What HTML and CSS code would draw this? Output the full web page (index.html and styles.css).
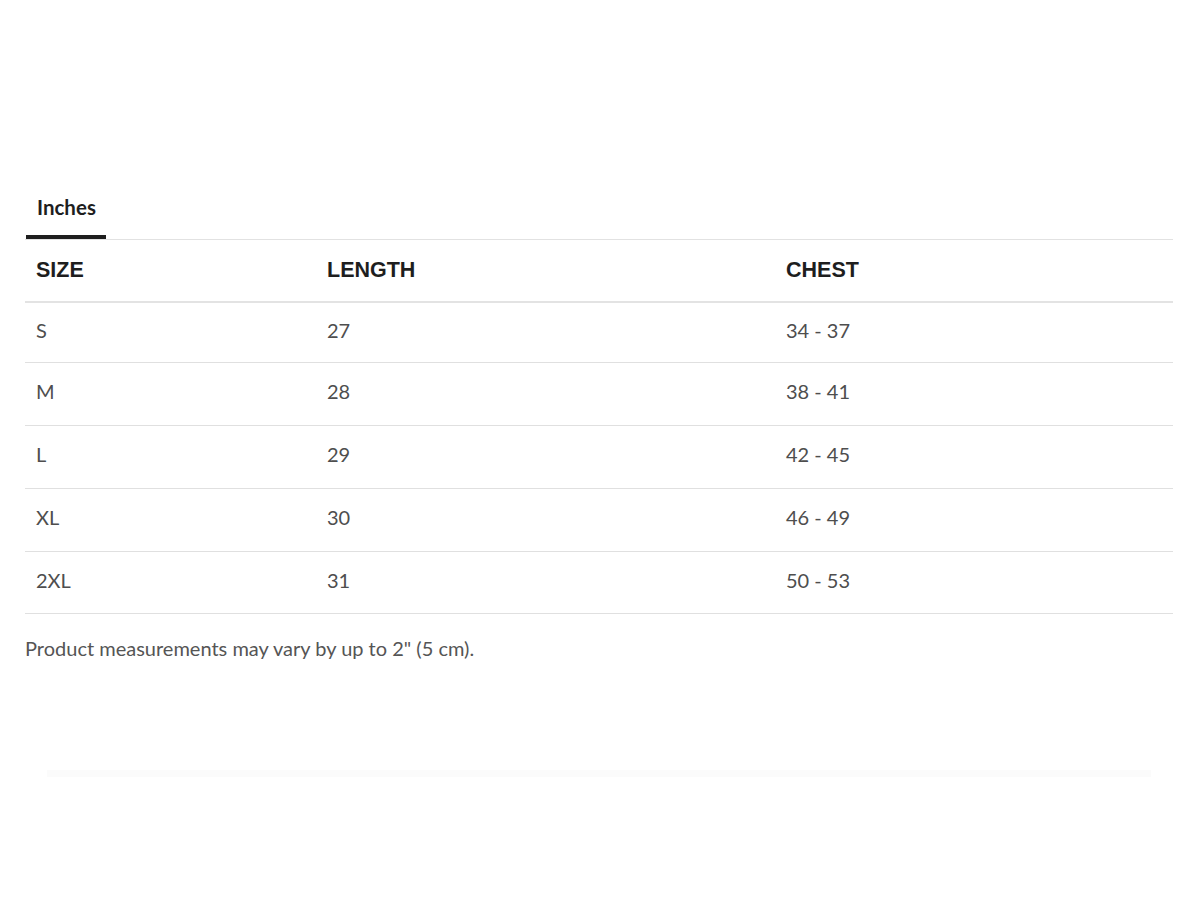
FILE: index.html
```html
<!DOCTYPE html>
<html lang="en">
<head>
<meta charset="utf-8">
<title>Size guide</title>
<link rel="stylesheet" href="styles.css">
</head>
<body>
<main class="guide">
  <div class="tabs">
    <div class="tab tab-active">Inches</div>
  </div>
  <table class="size-table">
    <thead>
      <tr>
        <th class="col-size">SIZE</th>
        <th class="col-length">LENGTH</th>
        <th class="col-chest">CHEST</th>
      </tr>
    </thead>
    <tbody>
      <tr class="first-row"><td>S</td><td>27</td><td>34 - 37</td></tr>
      <tr><td>M</td><td>28</td><td>38 - 41</td></tr>
      <tr><td>L</td><td>29</td><td>42 - 45</td></tr>
      <tr><td>XL</td><td>30</td><td>46 - 49</td></tr>
      <tr class="last-row"><td>2XL</td><td>31</td><td>50 - 53</td></tr>
    </tbody>
  </table>
  <p class="note">Product measurements may vary by up to 2" (5 cm).</p>
  <div class="fade"></div>
</main>
</body>
</html>
```
FILE: styles.css
```css
html, body {
  margin: 0;
  padding: 0;
  background: #ffffff;
}

.guide {
  width: 1148px;
  margin-left: 25px;
  padding-top: 191px;
}

.tabs {
  display: flex;
  border-bottom: 1px solid #e2e2e2;
}

.tab {
  font-family: "Lato", "Liberation Sans", sans-serif;
  font-weight: 700;
  font-size: 20.5px;
  color: #1e1e1e;
  padding: 5px 10px 16px 11px;
  line-height: 23px;
  margin-left: 1px;
}

.tab-active {
  border-bottom: 4px solid #1e1e1e;
}

.size-table {
  width: 100%;
  border-collapse: collapse;
  table-layout: fixed;
}

.size-table th {
  font-family: "Liberation Sans", Arial, sans-serif;
  font-weight: 700;
  font-size: 21.5px;
  color: #1e1e1e;
  text-align: left;
  height: 61px;
  padding: 0 0 0 11px;
  border-bottom: 2px solid #e3e3e3;
}

.col-size { width: 280px; }
.col-length { width: 448px; }
.col-chest { width: auto; }

.size-table td {
  font-family: "Lato", "Liberation Sans", sans-serif;
  font-size: 20px;
  color: #4e4e4e;
  height: 56px;
  padding: 0 0 6px 11px;
  border-bottom: 1px solid #e0e0e0;
}

.size-table .first-row td {
  height: 53px;
}

.size-table .last-row td {
  height: 55px;
}

.note {
  font-family: "Lato", "Liberation Sans", sans-serif;
  font-size: 20px;
  color: #555555;
  margin: 22px 0 0 0;
  line-height: 24px;
}

.fade {
  margin: 110px 22px 0 22px;
  height: 7px;
  background: #fbfbfb;
}
```
